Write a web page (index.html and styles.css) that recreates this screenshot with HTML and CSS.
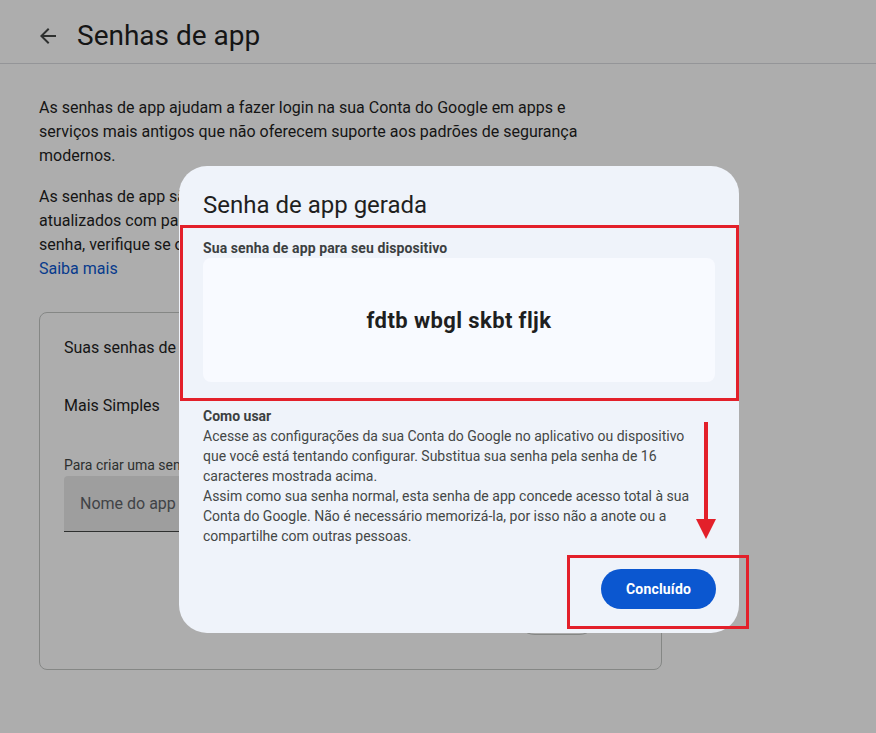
FILE: index.html
```html
<!DOCTYPE html>
<html lang="pt-BR">
<head>
<meta charset="utf-8">
<title>Senhas de app</title>
<link rel="stylesheet" href="styles.css">
</head>
<body>
<div class="page">
  <header class="topbar">
    <svg class="back" width="24" height="24" viewBox="0 0 24 24" aria-hidden="true"><path d="M20 11H7.83l5.59-5.59L12 4l-8 8 8 8 1.41-1.41L7.83 13H20v-2z"/></svg>
    <h1 class="page-title">Senhas de app</h1>
  </header>
  <main class="content">
    <p class="intro">As senhas de app ajudam a fazer login na sua Conta do Google em apps e serviços mais antigos que não oferecem suporte aos padrões de segurança modernos.</p>
    <p class="intro second">As senhas de app são menos seguras do que usar apps e serviços atualizados com padrões de segurança modernos. Antes de criar uma senha, verifique se o app precisa dela para fazer login.<br><a class="link" href="#">Saiba mais</a></p>
    <section class="card">
      <h2 class="card-title">Suas senhas de app</h2>
      <div class="app-row">Mais Simples</div>
      <p class="hint">Para criar uma senha de app específico, digite um nome abaixo...</p>
      <div class="field">Nome do app</div>
      <div class="card-actions"><span class="ghost-btn">Criar</span></div>
    </section>
  </main>
</div>

<div class="scrim"></div>

<div class="dialog" role="dialog">
  <h2 class="dialog-title">Senha de app gerada</h2>
  <div class="pw-section">
    <div class="pw-label">Sua senha de app para seu dispositivo</div>
    <div class="pw-box"><span class="pw">fdtb wbgl skbt fljk</span></div>
  </div>
  <div class="usage">
    <div class="usage-title">Como usar</div>
    <p class="usage-text">Acesse as configurações da sua Conta do Google no aplicativo ou dispositivo que você está tentando configurar. Substitua sua senha pela senha de 16 caracteres mostrada acima.</p>
    <p class="usage-text">Assim como sua senha normal, esta senha de app concede acesso total à sua Conta do Google. Não é necessário memorizá-la, por isso não a anote ou a compartilhe com outras pessoas.</p>
  </div>
  <div class="dialog-actions">
    <button class="done-btn" type="button">Concluído</button>
  </div>
  <div class="mark-box"></div>
  <svg class="mark-arrow" width="20" height="117" viewBox="0 0 20 117" aria-hidden="true">
    <rect x="8" y="0" width="4" height="100"/>
    <polygon points="0,97 20,97 10,117"/>
  </svg>
</div>
</body>
</html>
```

FILE: styles.css
```css
* { box-sizing: border-box; }

html, body {
  margin: 0;
  padding: 0;
  background: #ffffff;
  font-family: Roboto, "Liberation Sans", Arial, sans-serif;
  color: #1f1f1f;
}

.page {
  width: 876px;
  height: 733px;
  overflow: hidden;
}

.topbar {
  height: 64px;
  display: flex;
  align-items: center;
  padding-left: 36px;
  padding-top: 8px;
  border-bottom: 1px solid #dadce0;
}

.back {
  fill: #444746;
  flex: none;
}

.page-title {
  margin: 0 0 0 17px;
  font-size: 28px;
  font-weight: 400;
  line-height: 36px;
  color: #1f1f1f;
}

.content {
  padding: 0 39px;
}

.intro {
  margin: 32px 0 0;
  width: 548px;
  font-size: 16px;
  line-height: 24px;
  color: #1f1f1f;
}

.intro.second {
  margin-top: 17px;
}

.link {
  color: #0b57d0;
  text-decoration: none;
}

.card {
  margin-top: 31px;
  width: 623px;
  height: 358px;
  border: 1px solid #c4c7c5;
  border-radius: 8px;
  padding: 23px 24px 0;
}

.card-title {
  margin: 0;
  font-size: 16px;
  font-weight: 400;
  line-height: 24px;
  color: #1f1f1f;
}

.app-row {
  margin-top: 34px;
  font-size: 16px;
  line-height: 24px;
  color: #1f1f1f;
}

.hint {
  margin: 37px 0 0;
  font-size: 14px;
  line-height: 20px;
  color: #444746;
}

.field {
  margin-top: 1px;
  height: 56px;
  width: 560px;
  background: #e9e9e9;
  border-radius: 4px 4px 0 0;
  border-bottom: 1px solid #444746;
  padding-left: 16px;
  display: flex;
  align-items: center;
  font-size: 16px;
  color: #5f6368;
}

.card-actions {
  margin-top: 63px;
  display: flex;
  justify-content: flex-end;
  padding-right: 38px;
}

.ghost-btn {
  display: inline-flex;
  align-items: center;
  justify-content: center;
  height: 40px;
  width: 84px;
  border: 1px solid #c4c7c5;
  border-radius: 20px;
  font-size: 14px;
  color: #0b57d0;
}

.scrim {
  position: fixed;
  inset: 0;
  background: rgba(0, 0, 0, 0.32);
}

.dialog {
  position: fixed;
  left: 179px;
  top: 166px;
  width: 560px;
  height: 467px;
  background: #eff3fa;
  border-radius: 28px;
  padding: 23px 0 0;
}

.dialog-title {
  margin: 0;
  padding: 0 24px;
  font-size: 24px;
  font-weight: 400;
  line-height: 32px;
  color: #1f1f1f;
}

.pw-section {
  margin: 4px 0 0 1px;
  border: 3px solid #e3202a;
  padding: 10px 21px 16px 20px;
}

.pw-label {
  font-size: 14px;
  font-weight: 700;
  line-height: 20px;
  color: #3c3f41;
  letter-spacing: 0.1px;
}

.pw-box {
  height: 124px;
  background: #f8faff;
  border-radius: 8px;
  display: flex;
  align-items: center;
  justify-content: center;
}

.pw {
  font-size: 22px;
  font-weight: 700;
  color: #1f1f1f;
  letter-spacing: 0.4px;
}

.usage {
  margin-top: 5px;
  padding: 0 41px 0 24px;
}

.usage-title {
  font-size: 14px;
  font-weight: 700;
  line-height: 20px;
  color: #3c3f41;
}

.usage-text {
  margin: 0;
  font-size: 14px;
  line-height: 20px;
  color: #444746;
}

.dialog-actions {
  margin-top: 23px;
  padding: 0 23px;
  display: flex;
  justify-content: flex-end;
}

.done-btn {
  height: 40px;
  width: 115px;
  border: none;
  border-radius: 20px;
  background: #0b57d0;
  color: #ffffff;
  font-family: inherit;
  font-size: 14px;
  font-weight: 700;
  letter-spacing: 0.2px;
  padding: 0;
}

.mark-box {
  position: absolute;
  left: 388px;
  top: 389px;
  width: 182px;
  height: 74px;
  border: 3px solid #e3202a;
}

.mark-arrow {
  position: absolute;
  left: 517px;
  top: 256px;
  fill: #e3202a;
}
```
